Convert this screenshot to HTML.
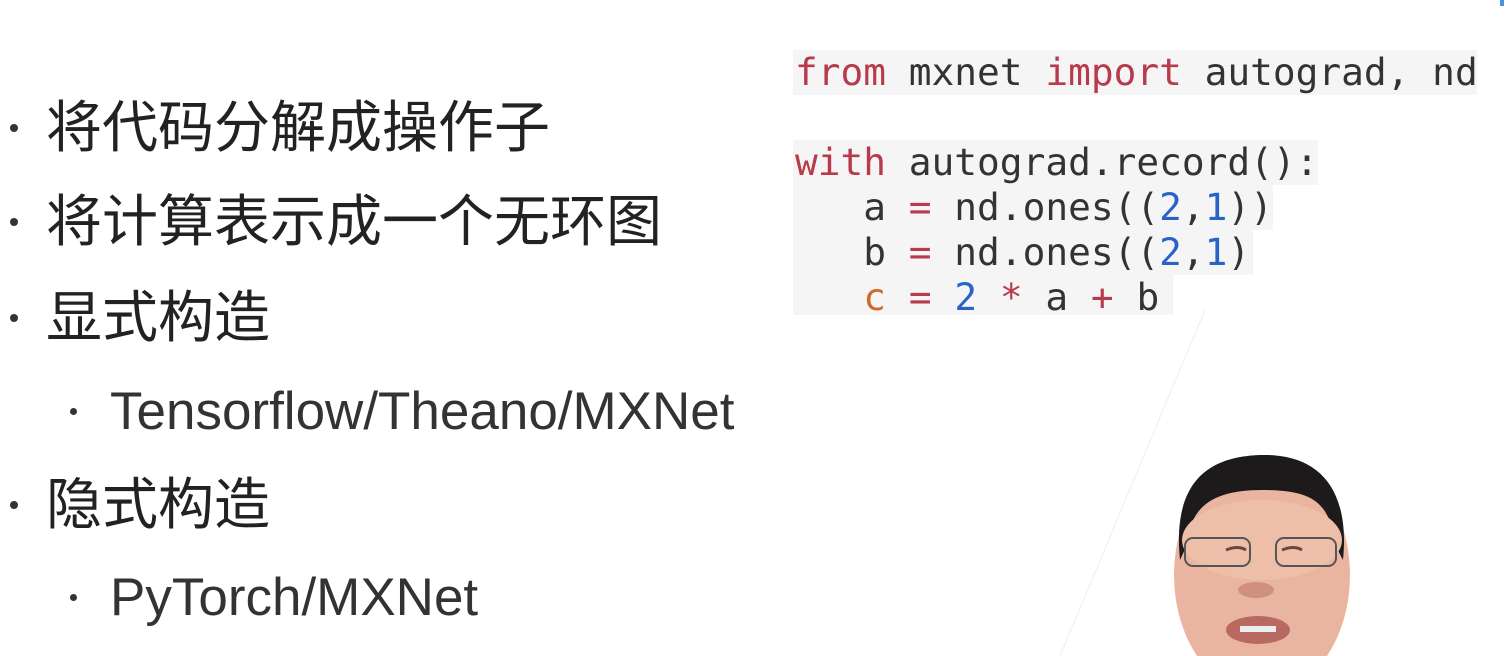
<!DOCTYPE html>
<html><head><meta charset="utf-8"><style>
html,body{margin:0;width:1507px;height:656px;overflow:hidden}
body{background:#fff;position:relative;font-family:"Liberation Sans","Noto Sans CJK SC",sans-serif;color:#222}
.b{position:absolute;font-size:56px;line-height:60px;white-space:nowrap}
.l{font-size:53px;color:#333}
.dot{position:absolute;width:8px;height:8px;border-radius:50%;background:#333}
.code{position:absolute;font-family:"DejaVu Sans Mono",monospace;font-size:37.8px;line-height:45px;white-space:pre;color:#333}
.k{color:#b83a4b}.n{color:#2a63c8}.o{color:#d06a2a}
</style></head><body>
<div class="dot" style="left:10px;top:124px"></div><div class="b" style="left:46px;top:98px">将代码分解成操作子</div>
<div class="dot" style="left:10px;top:218px"></div><div class="b" style="left:46px;top:192px">将计算表示成一个无环图</div>
<div class="dot" style="left:10px;top:314px"></div><div class="b" style="left:46px;top:288px">显式构造</div>
<div class="dot" style="left:70px;top:408px;width:7px;height:7px"></div><div class="b l" style="left:110px;top:382px">Tensorflow/Theano/MXNet</div>
<div class="dot" style="left:10px;top:501px"></div><div class="b" style="left:46px;top:475px">隐式构造</div>
<div class="dot" style="left:70px;top:594px;width:7px;height:7px"></div><div class="b l" style="left:110px;top:568px">PyTorch/MXNet</div>

<div style="position:absolute;left:793px;top:50px;width:684px;height:45px;background:#f5f5f5"></div>
<div style="position:absolute;left:793px;top:140px;width:525px;height:45px;background:#f5f5f5"></div>
<div style="position:absolute;left:793px;top:185px;width:480px;height:45px;background:#f5f5f5"></div>
<div style="position:absolute;left:793px;top:230px;width:460px;height:45px;background:#f5f5f5"></div>
<div style="position:absolute;left:793px;top:275px;width:380px;height:40px;background:#f5f5f5"></div>
<div class="code" style="left:795px;top:50px"><span class="k">from</span> mxnet <span class="k">import</span> autograd, nd

<span class="k">with</span> autograd.record():
   a <span class="k">=</span> nd.ones((<span class="n">2</span>,<span class="n">1</span>))
   b <span class="k">=</span> nd.ones((<span class="n">2</span>,<span class="n">1</span>)
   <span class="o">c</span> <span class="k">=</span> <span class="n">2</span> <span class="k">*</span> a <span class="k">+</span> b</div>

<svg style="position:absolute;left:0;top:0;display:block" width="1507" height="656" viewBox="0 0 1507 656">
<line x1="1205" y1="310" x2="1060" y2="656" stroke="#eee" stroke-width="1"/>
<rect x="1500" y="0" width="4" height="6" fill="#4a90e2"/>
<ellipse cx="1262" cy="575" rx="88" ry="120" fill="#e9b5a0"/>
<path d="M1180,560 C1172,480 1210,455 1265,455 C1320,455 1350,490 1343,560 L1335,545 C1330,500 1310,490 1262,490 C1215,490 1190,505 1187,545 Z" fill="#1c1a1a"/>
<ellipse cx="1262" cy="540" rx="80" ry="40" fill="#edbfa9"/>
<rect x="1185" y="538" width="65" height="28" rx="8" fill="none" stroke="#555" stroke-width="2"/>
<rect x="1276" y="538" width="60" height="28" rx="8" fill="none" stroke="#555" stroke-width="2"/>
<path d="M1226,550 q12,-5 20,0 M1282,550 q12,-5 20,0" stroke="#6a4a40" stroke-width="3" fill="none"/>
<ellipse cx="1256" cy="590" rx="18" ry="8" fill="#cf9080"/>
<ellipse cx="1258" cy="630" rx="32" ry="14" fill="#b86a62"/>
<rect x="1240" y="626" width="36" height="6" fill="#eee"/>
</svg>
</body></html>
